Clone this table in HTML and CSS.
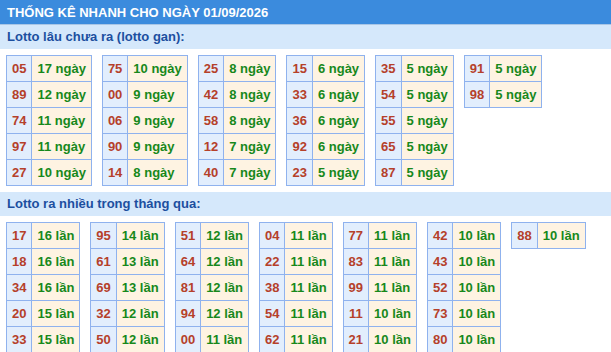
FILE: index.html
```html
<!DOCTYPE html>
<html lang="vi">
<head>
<meta charset="utf-8">
<title>Thống kê nhanh</title>
<link rel="stylesheet" href="styles.css">
</head>
<body>
<div class="page">
  <div class="header">THỐNG KÊ NHANH CHO NGÀY 01/09/2026</div>
  <div class="section-title">Lotto lâu chưa ra (lotto gan):</div>
  <div class="group">
    <table class="lt"><tr><td class="num">05</td><td class="val">17 ngày</td></tr><tr><td class="num">89</td><td class="val">12 ngày</td></tr><tr><td class="num">74</td><td class="val">11 ngày</td></tr><tr><td class="num">97</td><td class="val">11 ngày</td></tr><tr><td class="num">27</td><td class="val">10 ngày</td></tr></table>
    <table class="lt"><tr><td class="num">75</td><td class="val">10 ngày</td></tr><tr><td class="num">00</td><td class="val">9 ngày</td></tr><tr><td class="num">06</td><td class="val">9 ngày</td></tr><tr><td class="num">90</td><td class="val">9 ngày</td></tr><tr><td class="num">14</td><td class="val">8 ngày</td></tr></table>
    <table class="lt"><tr><td class="num">25</td><td class="val">8 ngày</td></tr><tr><td class="num">42</td><td class="val">8 ngày</td></tr><tr><td class="num">58</td><td class="val">8 ngày</td></tr><tr><td class="num">12</td><td class="val">7 ngày</td></tr><tr><td class="num">40</td><td class="val">7 ngày</td></tr></table>
    <table class="lt"><tr><td class="num">15</td><td class="val">6 ngày</td></tr><tr><td class="num">33</td><td class="val">6 ngày</td></tr><tr><td class="num">36</td><td class="val">6 ngày</td></tr><tr><td class="num">92</td><td class="val">6 ngày</td></tr><tr><td class="num">23</td><td class="val">5 ngày</td></tr></table>
    <table class="lt"><tr><td class="num">35</td><td class="val">5 ngày</td></tr><tr><td class="num">54</td><td class="val">5 ngày</td></tr><tr><td class="num">55</td><td class="val">5 ngày</td></tr><tr><td class="num">65</td><td class="val">5 ngày</td></tr><tr><td class="num">87</td><td class="val">5 ngày</td></tr></table>
    <table class="lt"><tr><td class="num">91</td><td class="val">5 ngày</td></tr><tr><td class="num">98</td><td class="val">5 ngày</td></tr></table>
  </div>
  <div class="section-title">Lotto ra nhiều trong tháng qua:</div>
  <div class="group">
    <table class="lt"><tr><td class="num">17</td><td class="val">16 lần</td></tr><tr><td class="num">18</td><td class="val">16 lần</td></tr><tr><td class="num">34</td><td class="val">16 lần</td></tr><tr><td class="num">20</td><td class="val">15 lần</td></tr><tr><td class="num">33</td><td class="val">15 lần</td></tr></table>
    <table class="lt"><tr><td class="num">95</td><td class="val">14 lần</td></tr><tr><td class="num">61</td><td class="val">13 lần</td></tr><tr><td class="num">69</td><td class="val">13 lần</td></tr><tr><td class="num">32</td><td class="val">12 lần</td></tr><tr><td class="num">50</td><td class="val">12 lần</td></tr></table>
    <table class="lt"><tr><td class="num">51</td><td class="val">12 lần</td></tr><tr><td class="num">64</td><td class="val">12 lần</td></tr><tr><td class="num">81</td><td class="val">12 lần</td></tr><tr><td class="num">94</td><td class="val">12 lần</td></tr><tr><td class="num">00</td><td class="val">11 lần</td></tr></table>
    <table class="lt"><tr><td class="num">04</td><td class="val">11 lần</td></tr><tr><td class="num">22</td><td class="val">11 lần</td></tr><tr><td class="num">38</td><td class="val">11 lần</td></tr><tr><td class="num">54</td><td class="val">11 lần</td></tr><tr><td class="num">62</td><td class="val">11 lần</td></tr></table>
    <table class="lt"><tr><td class="num">77</td><td class="val">11 lần</td></tr><tr><td class="num">83</td><td class="val">11 lần</td></tr><tr><td class="num">99</td><td class="val">11 lần</td></tr><tr><td class="num">11</td><td class="val">10 lần</td></tr><tr><td class="num">21</td><td class="val">10 lần</td></tr></table>
    <table class="lt"><tr><td class="num">42</td><td class="val">10 lần</td></tr><tr><td class="num">43</td><td class="val">10 lần</td></tr><tr><td class="num">52</td><td class="val">10 lần</td></tr><tr><td class="num">73</td><td class="val">10 lần</td></tr><tr><td class="num">80</td><td class="val">10 lần</td></tr></table>
    <table class="lt"><tr><td class="num">88</td><td class="val">10 lần</td></tr></table>
  </div>
</div>
</body>
</html>
```
FILE: styles.css
```css
html, body {
  margin: 0;
  padding: 0;
  background: #ffffff;
}
.page {
  font-family: "Liberation Sans", Arial, sans-serif;
  font-size: 13px;
  font-weight: bold;
}
.header {
  height: 24px;
  box-sizing: border-box;
  padding: 2px 7px 0;
  line-height: 22px;
  background: #3b8bdd;
  color: #ffffff;
  border-bottom: 1px solid #a9c6e6;
  height: 25px;
}
.section-title {
  height: 24px;
  line-height: 24px;
  padding: 0 7px;
  background: #d5e8fb;
  color: #1c4f9f;
}
.group {
  display: flex;
  flex-wrap: wrap;
  align-items: flex-start;
  gap: 10px;
  padding: 6px 6px 6px;
}
.lt {
  border-collapse: collapse;
}
.lt td {
  border: 1px solid #8fb2ee;
  padding: 5px 5px;
  line-height: 15px;
  white-space: nowrap;
}
.lt .num {
  background: #e2eefd;
  color: #b5402a;
  text-align: center;
}
.lt .val {
  background: #fef3e2;
  color: #17881b;
}
```
